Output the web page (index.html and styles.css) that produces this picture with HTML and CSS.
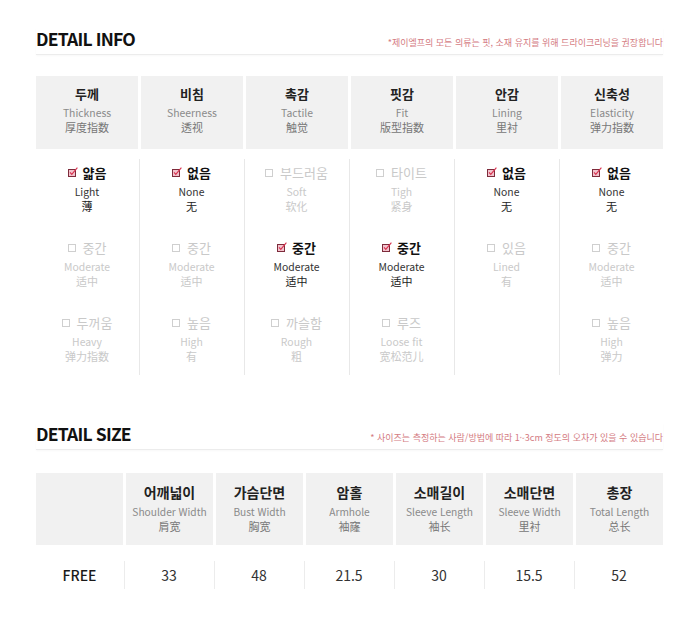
FILE: index.html
```html
<!DOCTYPE html>
<html lang="ko">
<head>
<meta charset="utf-8">
<title>Detail Info</title>
<link rel="stylesheet" href="styles.css">
</head>
<body>
<div class="page">
  <section class="info">
    <div class="sec-head">
      <h2>DETAIL INFO</h2>
      <p class="note">*제이엘프의 모든 의류는 핏, 소재 유지를 위해 드라이크리닝을 권장합니다</p>
    </div>
    <div class="info-head">
      <div class="hcell"><div class="ko">두께</div><div class="en">Thickness</div><div class="zh">厚度指数</div></div>
      <div class="hcell"><div class="ko">비침</div><div class="en">Sheerness</div><div class="zh">透视</div></div>
      <div class="hcell"><div class="ko">촉감</div><div class="en">Tactile</div><div class="zh">触觉</div></div>
      <div class="hcell"><div class="ko">핏감</div><div class="en">Fit</div><div class="zh">版型指数</div></div>
      <div class="hcell"><div class="ko">안감</div><div class="en">Lining</div><div class="zh">里衬</div></div>
      <div class="hcell"><div class="ko">신축성</div><div class="en">Elasticity</div><div class="zh">弹力指数</div></div>
    </div>
    <div class="info-body">
      <div class="col">
        <div class="opt on"><div class="lbl"><svg class="cb" viewBox="0 0 10 10"><rect x="0.5" y="2.5" width="7" height="7" fill="#f2c4ce" stroke="#7d2b3b"/><path d="M2 5.3 L3.8 7.4 L9.4 0.6" fill="none" stroke="#d8324f" stroke-width="1.1"/></svg><span>얇음</span></div><div class="en">Light</div><div class="zh">薄</div></div>
        <div class="opt off"><div class="lbl"><svg class="cb" viewBox="0 0 10 10"><rect x="0.5" y="2.5" width="7" height="7" fill="none" stroke="#cfcfcf"/></svg><span>중간</span></div><div class="en">Moderate</div><div class="zh">适中</div></div>
        <div class="opt off"><div class="lbl"><svg class="cb" viewBox="0 0 10 10"><rect x="0.5" y="2.5" width="7" height="7" fill="none" stroke="#cfcfcf"/></svg><span>두꺼움</span></div><div class="en">Heavy</div><div class="zh">弹力指数</div></div>
      </div>
      <div class="col">
        <div class="opt on"><div class="lbl"><svg class="cb" viewBox="0 0 10 10"><rect x="0.5" y="2.5" width="7" height="7" fill="#f2c4ce" stroke="#7d2b3b"/><path d="M2 5.3 L3.8 7.4 L9.4 0.6" fill="none" stroke="#d8324f" stroke-width="1.1"/></svg><span>없음</span></div><div class="en">None</div><div class="zh">无</div></div>
        <div class="opt off"><div class="lbl"><svg class="cb" viewBox="0 0 10 10"><rect x="0.5" y="2.5" width="7" height="7" fill="none" stroke="#cfcfcf"/></svg><span>중간</span></div><div class="en">Moderate</div><div class="zh">适中</div></div>
        <div class="opt off"><div class="lbl"><svg class="cb" viewBox="0 0 10 10"><rect x="0.5" y="2.5" width="7" height="7" fill="none" stroke="#cfcfcf"/></svg><span>높음</span></div><div class="en">High</div><div class="zh">有</div></div>
      </div>
      <div class="col">
        <div class="opt off"><div class="lbl"><svg class="cb" viewBox="0 0 10 10"><rect x="0.5" y="2.5" width="7" height="7" fill="none" stroke="#cfcfcf"/></svg><span>부드러움</span></div><div class="en">Soft</div><div class="zh">软化</div></div>
        <div class="opt on"><div class="lbl"><svg class="cb" viewBox="0 0 10 10"><rect x="0.5" y="2.5" width="7" height="7" fill="#f2c4ce" stroke="#7d2b3b"/><path d="M2 5.3 L3.8 7.4 L9.4 0.6" fill="none" stroke="#d8324f" stroke-width="1.1"/></svg><span>중간</span></div><div class="en">Moderate</div><div class="zh">适中</div></div>
        <div class="opt off"><div class="lbl"><svg class="cb" viewBox="0 0 10 10"><rect x="0.5" y="2.5" width="7" height="7" fill="none" stroke="#cfcfcf"/></svg><span>까슬함</span></div><div class="en">Rough</div><div class="zh">粗</div></div>
      </div>
      <div class="col">
        <div class="opt off"><div class="lbl"><svg class="cb" viewBox="0 0 10 10"><rect x="0.5" y="2.5" width="7" height="7" fill="none" stroke="#cfcfcf"/></svg><span>타이트</span></div><div class="en">Tigh</div><div class="zh">紧身</div></div>
        <div class="opt on"><div class="lbl"><svg class="cb" viewBox="0 0 10 10"><rect x="0.5" y="2.5" width="7" height="7" fill="#f2c4ce" stroke="#7d2b3b"/><path d="M2 5.3 L3.8 7.4 L9.4 0.6" fill="none" stroke="#d8324f" stroke-width="1.1"/></svg><span>중간</span></div><div class="en">Moderate</div><div class="zh">适中</div></div>
        <div class="opt off"><div class="lbl"><svg class="cb" viewBox="0 0 10 10"><rect x="0.5" y="2.5" width="7" height="7" fill="none" stroke="#cfcfcf"/></svg><span>루즈</span></div><div class="en">Loose fit</div><div class="zh">宽松范儿</div></div>
      </div>
      <div class="col">
        <div class="opt on"><div class="lbl"><svg class="cb" viewBox="0 0 10 10"><rect x="0.5" y="2.5" width="7" height="7" fill="#f2c4ce" stroke="#7d2b3b"/><path d="M2 5.3 L3.8 7.4 L9.4 0.6" fill="none" stroke="#d8324f" stroke-width="1.1"/></svg><span>없음</span></div><div class="en">None</div><div class="zh">无</div></div>
        <div class="opt off"><div class="lbl"><svg class="cb" viewBox="0 0 10 10"><rect x="0.5" y="2.5" width="7" height="7" fill="none" stroke="#cfcfcf"/></svg><span>있음</span></div><div class="en">Lined</div><div class="zh">有</div></div>
      </div>
      <div class="col">
        <div class="opt on"><div class="lbl"><svg class="cb" viewBox="0 0 10 10"><rect x="0.5" y="2.5" width="7" height="7" fill="#f2c4ce" stroke="#7d2b3b"/><path d="M2 5.3 L3.8 7.4 L9.4 0.6" fill="none" stroke="#d8324f" stroke-width="1.1"/></svg><span>없음</span></div><div class="en">None</div><div class="zh">无</div></div>
        <div class="opt off"><div class="lbl"><svg class="cb" viewBox="0 0 10 10"><rect x="0.5" y="2.5" width="7" height="7" fill="none" stroke="#cfcfcf"/></svg><span>중간</span></div><div class="en">Moderate</div><div class="zh">适中</div></div>
        <div class="opt off"><div class="lbl"><svg class="cb" viewBox="0 0 10 10"><rect x="0.5" y="2.5" width="7" height="7" fill="none" stroke="#cfcfcf"/></svg><span>높음</span></div><div class="en">High</div><div class="zh">弹力</div></div>
      </div>
    </div>
  </section>

  <section class="size">
    <div class="sec-head">
      <h2>DETAIL SIZE</h2>
      <p class="note">* 사이즈는 측정하는 사람/방법에 따라 1~3cm 정도의 오차가 있을 수 있습니다</p>
    </div>
    <div class="size-head">
      <div class="scell"></div>
      <div class="scell"><div class="ko">어깨넓이</div><div class="en">Shoulder Width</div><div class="zh">肩宽</div></div>
      <div class="scell"><div class="ko">가슴단면</div><div class="en">Bust Width</div><div class="zh">胸宽</div></div>
      <div class="scell"><div class="ko">암홀</div><div class="en">Armhole</div><div class="zh">袖窿</div></div>
      <div class="scell"><div class="ko">소매길이</div><div class="en">Sleeve Length</div><div class="zh">袖长</div></div>
      <div class="scell"><div class="ko">소매단면</div><div class="en">Sleeve Width</div><div class="zh">里衬</div></div>
      <div class="scell"><div class="ko">총장</div><div class="en">Total Length</div><div class="zh">总长</div></div>
    </div>
    <div class="size-body">
      <div class="v name">FREE</div>
      <div class="v">33</div>
      <div class="v">48</div>
      <div class="v">21.5</div>
      <div class="v">30</div>
      <div class="v">15.5</div>
      <div class="v">52</div>
    </div>
  </section>
</div>
</body>
</html>
```

FILE: styles.css
```css
body {
  margin: 0;
  background: #ffffff;
  font-family: "Noto Sans CJK KR", "Noto Sans", sans-serif;
  color: #222222;
}

.page {
  width: 627px;
  margin-left: 36px;
  padding-top: 28px;
}

.sec-head {
  display: flex;
  justify-content: space-between;
  align-items: baseline;
  padding-bottom: 4px;
  border-bottom: 1px solid #ececec;
  box-shadow: 0 1px 2px rgba(0, 0, 0, 0.03);
}

.sec-head h2 {
  margin: 0;
  font-size: 17.5px;
  line-height: 22px;
  letter-spacing: -0.8px;
  font-weight: 700;
  color: #111111;
}

.note {
  margin: 0;
  font-size: 9px;
  line-height: 12px;
  letter-spacing: 0;
  color: #d47b82;
}

.zh {
  font-family: "Noto Sans CJK SC", "Noto Sans CJK KR", sans-serif;
}

/* DETAIL INFO header */
.info-head {
  display: grid;
  grid-template-columns: repeat(6, 1fr);
  gap: 3px;
  margin-top: 21px;
}

.hcell {
  background: #f1f1f1;
  height: 73px;
  box-sizing: border-box;
  padding-top: 9px;
  text-align: center;
}

.hcell .ko {
  font-size: 13px;
  line-height: 18px;
  font-weight: 700;
  color: #222222;
}

.hcell .en {
  margin-top: 3px;
  font-size: 10.4px;
  line-height: 14px;
  color: #8a8a8a;
}

.hcell .zh {
  font-size: 11px;
  line-height: 14px;
  color: #777777;
}

/* DETAIL INFO body */
.info-body {
  display: grid;
  grid-template-columns: repeat(6, 1fr);
  column-gap: 3px;
  margin-top: 10px;
}

.col {
  display: flex;
  flex-direction: column;
  gap: 26px;
  padding: 5px 0 12px;
  text-align: center;
}

.col + .col {
  margin-left: -2px;
  border-left: 1px solid #e8e8e8;
}

.lbl {
  display: flex;
  justify-content: center;
  align-items: center;
  gap: 5px;
  font-size: 13px;
  line-height: 18px;
}

.cb {
  width: 10px;
  height: 10px;
  flex: none;
  margin-top: -2px;
}

.opt .en {
  margin-top: 3px;
  font-size: 10.4px;
  line-height: 14px;
}

.opt .zh {
  font-size: 11px;
  line-height: 14px;
}

.opt.on .lbl {
  font-weight: 700;
  color: #111111;
}

.opt.on .en {
  color: #333333;
}

.opt.on .zh {
  color: #222222;
}

.opt.off {
  color: #c9c9c9;
}

/* DETAIL SIZE */
.size {
  margin-top: 48px;
}

.size-head {
  display: grid;
  grid-template-columns: repeat(7, 1fr);
  gap: 3px;
  margin-top: 23px;
}

.scell {
  background: #f1f1f1;
  height: 72px;
  box-sizing: border-box;
  padding-top: 10px;
  text-align: center;
}

.scell .ko {
  font-size: 14px;
  line-height: 18px;
  font-weight: 700;
  color: #222222;
}

.scell .en {
  margin-top: 4px;
  font-size: 10.2px;
  line-height: 14px;
  color: #8a8a8a;
}

.scell .zh {
  font-size: 11px;
  line-height: 14px;
  color: #777777;
}

.size-body {
  display: grid;
  grid-template-columns: repeat(7, 1fr);
  column-gap: 3px;
  margin-top: 16px;
}

.v {
  height: 28px;
  line-height: 28px;
  text-align: center;
  font-size: 14px;
  color: #333333;
}

.v + .v {
  margin-left: -2px;
  border-left: 1px solid #ececec;
}

.v.name {
  font-weight: 500;
  color: #1a1a1a;
}
```
